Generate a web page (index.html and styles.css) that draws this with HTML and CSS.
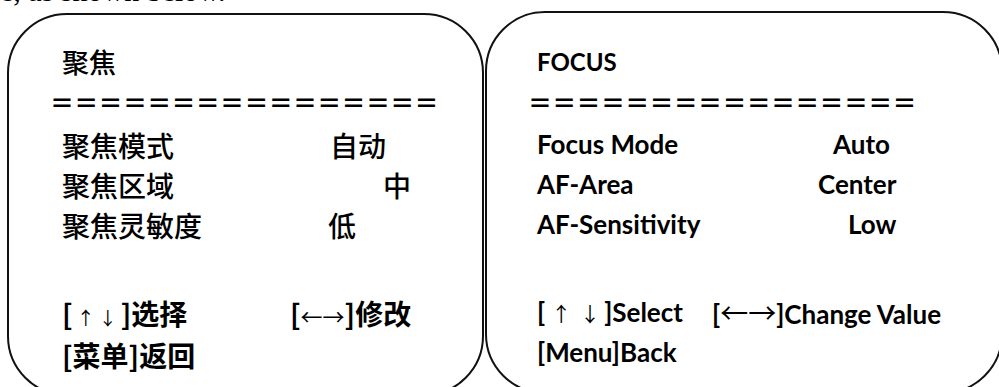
FILE: index.html
```html
<!DOCTYPE html>
<html lang="zh">
<head>
    <meta charset="UTF-8">
    <meta name="viewport" content="width=device-width, initial-scale=1.0">
    <title>Focus menu</title>
    <link rel="stylesheet" href="styles.css">
</head>
<body>
    <p class="lead">e, as shown below.</p>

    <div class="screens">
        <!-- Chinese OSD -->
        <section class="osd osd-cn">
            <h2 class="osd-title">聚焦</h2>
            <div class="osd-rule">＝＝＝＝＝＝＝＝＝＝＝＝＝＝＝＝</div>
            <dl class="osd-items">
                <dt>聚焦模式</dt><dd class="val-auto">自动</dd>
                <dt>聚焦区域</dt><dd class="val-center">中</dd>
                <dt>聚焦灵敏度</dt><dd class="val-low">低</dd>
            </dl>
            <div class="osd-keys">
                <div class="key-row">
                    <span class="key-first">[<span class="arrows ud">&nbsp;↑ ↓&nbsp;</span>]选择</span>
                    <span>[<span class="arrows lr">←→</span>]修改</span>
                </div>
                <div class="key-row">[菜单]返回</div>
            </div>
        </section>

        <!-- English OSD -->
        <section class="osd osd-en">
            <h2 class="osd-title">FOCUS</h2>
            <div class="osd-rule">＝＝＝＝＝＝＝＝＝＝＝＝＝＝＝＝</div>
            <dl class="osd-items">
                <dt>Focus Mode</dt><dd class="val-auto">Auto</dd>
                <dt>AF-Area</dt><dd class="val-center">Center</dd>
                <dt>AF-Sensitivity</dt><dd class="val-low">Low</dd>
            </dl>
            <div class="osd-keys">
                <div class="key-row">
                    <span class="key-first">[<span class="arrows ud">↑&nbsp;&nbsp;↓</span>]Select</span>
                    <span>[<span class="arrows lr">←→</span>]Change Value</span>
                </div>
                <div class="key-row">[Menu]Back</div>
            </div>
        </section>
    </div>
</body>
</html>
```

FILE: styles.css
```css
/* Basic Reset */
html, body {
    margin: 0;
    padding: 0;
    height: 387px;
    overflow: hidden;
    background-color: #fff;
    color: #000;
}

h2, p, dl, dd {
    margin: 0;
    padding: 0;
}

/* cut-off sentence above the figure */
.lead {
    margin-top: -24px;
    font: 30px/30px "Liberation Serif", serif;
    white-space: nowrap;
}

.screens {
    display: flex;
    align-items: flex-start;
    padding-left: 7px;
    margin-top: 4px;
}

/* rounded OSD frames */
.osd {
    flex: none;
    box-sizing: border-box;
    height: 383px;
    border: 2px solid #111;
    border-radius: 60px;
}

.osd-cn {
    width: 477px;
    margin-top: 3px;
    padding: 27px 0 0 53px;
    font-family: "Noto Sans CJK SC", sans-serif;
}

.osd-en {
    width: 518px;
    margin-top: 1px;
    margin-left: 1px;
    padding: 29px 0 0 50px;
    font-family: Lato, "Noto Sans CJK SC", sans-serif;
    font-weight: 700;
}

.osd-title {
    font-size: 27px;
    line-height: 40px;
    font-weight: 500;
}

.osd-en .osd-title {
    font-size: 24px;
    font-weight: 700;
}

.osd-rule {
    font: 700 24px/40px "Noto Sans CJK SC", sans-serif;
    white-space: nowrap;
    margin-left: -12px;
    letter-spacing: 0.3px;
}

.osd-en .osd-rule {
    margin-left: -9px;
}

/* menu items */
.osd-items {
    display: grid;
    grid-template-columns: 268px auto;
    margin-top: 3px;
    font-size: 28px;
    line-height: 40px;
    font-weight: 500;
}

.osd-en .osd-items {
    grid-template-columns: 283px auto;
    margin-top: 2px;
    font-size: 26px;
    font-weight: 700;
}

.osd-cn .val-center { margin-left: 53px; }
.osd-cn .val-low { margin-left: -2px; }
.osd-en .val-auto { margin-left: 13px; }
.osd-en .val-center { margin-left: -2px; }
.osd-en .val-low { margin-left: 28px; }

/* key hints */
.osd-keys {
    margin-top: 49px;
    font-size: 28px;
    line-height: 38px;
    font-weight: 700;
}

.osd-en .osd-keys {
    font-size: 26px;
}

.key-row {
    display: flex;
    white-space: nowrap;
}

.key-first {
    width: 228px;
}

.osd-en .key-first {
    width: 175px;
}

.arrows {
    font-family: "Noto Sans CJK SC", sans-serif;
    font-weight: 400;
    font-size: 22px;
}

.osd-cn .arrows.ud {
    font-size: 18px;
}

.osd-en .arrows.ud {
    font-size: 20px;
    padding: 0 4px 0 6px;
}

.osd-en .arrows.lr {
    font-size: 28px;
}
```
